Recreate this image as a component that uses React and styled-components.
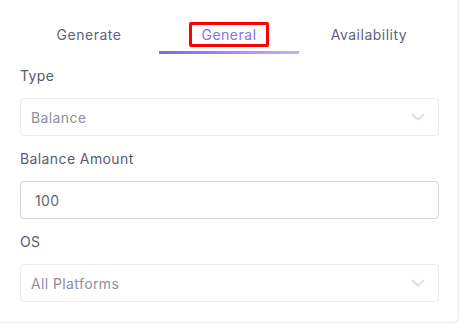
import React, { useState } from 'react'
import styled, { createGlobalStyle } from 'styled-components'

const Global = createGlobalStyle`
  body { margin: 0; background: #fff; font-family: Inter, "Noto Sans", sans-serif; }
`

const tabs = ['Generate', 'General', 'Availability']

const Chevron = () => (
  <svg width="14" height="8" viewBox="0 0 14 8" fill="none">
    <path d="M1.5 1.5 L7 6.5 L12.5 1.5" stroke="#dedede" strokeWidth="1.8" strokeLinecap="round" strokeLinejoin="round" />
  </svg>
)

const App = () => {
  const [active, setActive] = useState(1)
  const [amount, setAmount] = useState('100')
  return (
    <>
      <Global />
      <Card>
        <TabBar>
          {tabs.map((t, i) => (
            <Tab key={t} $active={i === active} onClick={() => setActive(i)}>
              {i === active ? <Marked>{t}</Marked> : t}
            </Tab>
          ))}
        </TabBar>
        <Field>
          <Label>Type</Label>
          <Select>
            <span>Balance</span>
            <Chevron />
          </Select>
        </Field>
        <Field>
          <Label>Balance Amount</Label>
          <Input value={amount} onChange={e => setAmount(e.target.value)} />
        </Field>
        <Field>
          <Label>OS</Label>
          <Select>
            <span>All Platforms</span>
            <Chevron />
          </Select>
        </Field>
      </Card>
    </>
  )
}

// card, cut at the left and top edges of the shot
const Card = styled.div`
  box-sizing: border-box; width: 459px; height: 323px;
  border-right: 1px solid #ececec; border-bottom: 1px solid #ececec;
  border-bottom-right-radius: 6px;
  padding: 0 20px 0 20px;
  display: flex; flex-direction: column;`

const TabBar = styled.div`
  display: grid; grid-template-columns: repeat(3, 140px);
  margin-left: -1px; margin-bottom: 12px;`

const Tab = styled.div`
  height: 54px; box-sizing: border-box;
  padding-top: ${p => (p.$active ? '22px' : '25px')};
  text-align: center; font-size: 14px; line-height: 19px; letter-spacing: 0.5px;
  color: ${p => (p.$active ? '#7f74ec' : '#62627a')};
  border-bottom: 3px solid transparent;
  border-image: ${p => (p.$active ? 'linear-gradient(90deg, #766be6, #bdb5f6) 1' : 'none')};
  cursor: pointer;`

const Marked = styled.span`
  display: inline-block; border: 3px solid #ff0000; border-radius: 2px;
  padding: 0 9px;`

const Field = styled.div`
  display: flex; flex-direction: column; gap: 12px; margin-bottom: 13px;`

const Label = styled.div`
  font-size: 14px; line-height: 20px; color: #5a5a6c; letter-spacing: 0.4px;`

const Select = styled.div`
  box-sizing: border-box; height: 38px; width: 419px;
  border: 1px solid #ededed; border-radius: 4px;
  display: flex; align-items: center; justify-content: space-between;
  padding: 0 13px 0 10px;
  font-size: 14px; color: #8f8f9c; letter-spacing: 0.4px;`

const Input = styled.input`
  box-sizing: border-box; height: 38px; width: 419px;
  border: 1px solid #d3d3d8; border-radius: 4px; outline: none;
  padding: 0 14px; font-family: inherit;
  font-size: 14px; color: #66666f; letter-spacing: 0.4px;`

export default App
